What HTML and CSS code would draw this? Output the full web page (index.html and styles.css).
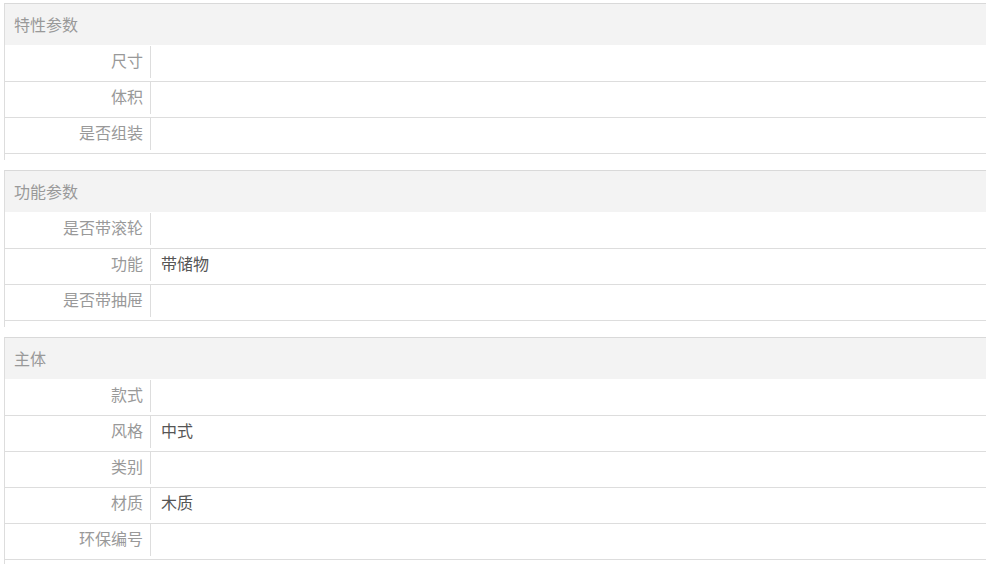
FILE: index.html
```html
<!DOCTYPE html>
<html lang="zh">
<head>
<meta charset="utf-8">
<link rel="stylesheet" href="styles.css">
</head>
<body>
<div class="page">
  <section class="group">
    <div class="group-title">特性参数</div>
    <div class="rows">
      <div class="row"><div class="label">尺寸</div><div class="value"></div></div>
      <div class="row"><div class="label">体积</div><div class="value"></div></div>
      <div class="row"><div class="label">是否组装</div><div class="value"></div></div>
    </div>
  </section>
  <section class="group">
    <div class="group-title">功能参数</div>
    <div class="rows">
      <div class="row"><div class="label">是否带滚轮</div><div class="value"></div></div>
      <div class="row"><div class="label">功能</div><div class="value">带储物</div></div>
      <div class="row"><div class="label">是否带抽屉</div><div class="value"></div></div>
    </div>
  </section>
  <section class="group">
    <div class="group-title">主体</div>
    <div class="rows">
      <div class="row"><div class="label">款式</div><div class="value"></div></div>
      <div class="row"><div class="label">风格</div><div class="value">中式</div></div>
      <div class="row"><div class="label">类别</div><div class="value"></div></div>
      <div class="row"><div class="label">材质</div><div class="value">木质</div></div>
      <div class="row"><div class="label">环保编号</div><div class="value"></div></div>
    </div>
  </section>
</div>
</body>
</html>
```
FILE: styles.css
```css
html, body {
  margin: 0;
  padding: 0;
  background: #fff;
}
body {
  font-family: "Noto Sans CJK SC", "Noto Sans", sans-serif;
  font-size: 16px;
}
.page {
  padding: 3px 6px 0 4px;
}
.group {
  border-left: 1px solid #ddd;
  border-top: 1px solid #d9d9d9;
  padding-bottom: 6px;
  margin-bottom: 10px;
}
.group-title {
  height: 41px;
  line-height: 41px;
  padding-left: 9px;
  background: #f3f3f3;
  color: #999;
}
.rows {
  padding-top: 1px;
}
.row {
  display: flex;
  height: 35px;
  border-bottom: 1px solid #ddd;
}
.label {
  width: 138px;
  padding-right: 7px;
  text-align: right;
  color: #999;
  line-height: 29px;
}
.value {
  flex: 1;
  height: 32px;
  border-left: 1px solid #ddd;
  padding-left: 10px;
  line-height: 29px;
  color: #555;
}
```
